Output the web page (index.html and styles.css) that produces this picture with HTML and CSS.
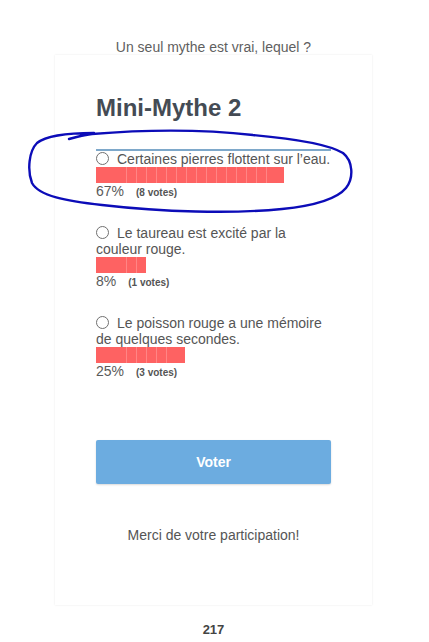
FILE: index.html
```html
<!DOCTYPE html>
<html lang="fr">
<head>
  <meta charset="UTF-8" />
  <meta name="viewport" content="width=device-width, initial-scale=1.0" />
  <title>Mini-Mythe 2</title>
  <link rel="stylesheet" href="styles.css">
</head>
<body>
  <div class="page">
    <p class="intro">Un seul mythe est vrai, lequel ?</p>

    <div class="card">
      <h2>Mini-Mythe 2</h2>

      <div class="options">
        <div class="option">
          <div class="label"><span class="radio"></span>Certaines pierres flottent sur l’eau.</div>
          <div class="bar" style="width: 188px"></div>
          <div class="result">67%<span class="votes">(8 votes)</span></div>
        </div>
        <div class="option">
          <div class="label"><span class="radio"></span>Le taureau est excité par la couleur rouge.</div>
          <div class="bar" style="width: 50px"></div>
          <div class="result">8%<span class="votes">(1 votes)</span></div>
        </div>
        <div class="option">
          <div class="label"><span class="radio"></span>Le poisson rouge a une mémoire de quelques secondes.</div>
          <div class="bar" style="width: 89px"></div>
          <div class="result">25%<span class="votes">(3 votes)</span></div>
        </div>
      </div>

      <div class="vote-btn">Voter</div>

      <p class="thanks">Merci de votre participation!</p>
    </div>

    <p class="count">217</p>
  </div>

  <!-- annotation au stylo par-dessus la page -->
  <svg class="scribble" width="429" height="642" viewBox="0 0 429 642">
    <path d="M69,139 C76,137 83,135 92,134 C140,130 200,129 253,135 C298,139 328,144 343,153 C353,161 354,178 346,188 C336,200 312,206 282,209 C232,214 162,212 102,205 C66,201 39,196 32,183 C27,170 29,151 37,143 C47,135 70,133 94,133"
          fill="none" stroke="#0c0cb8" stroke-width="2.4" stroke-linecap="round" stroke-linejoin="round" />
  </svg>
</body>
</html>
```

FILE: styles.css
```css
body {
  margin: 0;
  font-family: "Liberation Sans", Arial, sans-serif;
  font-size: 14px;
  line-height: 16px;
  color: #555;
  background: #fff;
}
.page {
  width: 427px;
  padding-top: 39px;
}
.intro {
  margin: 0;
  text-align: center;
  color: #5f5f5f;
}
.card {
  width: 235px;
  margin: 0 auto;
  padding: 39px 41px 62px;
  box-shadow: 0 0 2px rgba(0, 0, 0, 0.09);
}
h2 {
  margin: 0;
  font-size: 24px;
  line-height: 28px;
  color: #444b54;
}
.options {
  margin-top: 27px;
  border-top: 2px solid #7ea8ca;
}
.option {
  margin-bottom: 26px;
}
.option:last-child {
  margin-bottom: 0;
}
.radio {
  display: inline-block;
  box-sizing: border-box;
  width: 13px;
  height: 13px;
  border: 1px solid #707070;
  border-radius: 50%;
  margin-right: 8px;
  vertical-align: -1px;
}
.bar {
  height: 16px;
  background:
    linear-gradient(#fe6262, #fe6262) 0 0 / 29px 100% no-repeat,
    repeating-linear-gradient(90deg, #fe6262 0 9px, #ff8585 9px 10px) -9px 0;
  background-color: #fe6262;
}
.result {
  height: 16px;
  color: #5a5a5a;
}
.votes {
  margin-left: 12px;
  font-size: 10px;
  line-height: 10px;
  font-weight: bold;
  color: #555;
}
.vote-btn {
  margin-top: 61px;
  height: 44px;
  line-height: 44px;
  text-align: center;
  background-color: #6cace0;
  color: #fff;
  font-weight: bold;
  border-radius: 2px;
  box-shadow: 0 1px 2px rgba(0, 0, 0, 0.15);
  cursor: pointer;
}
.thanks {
  margin: 43px 0 0;
  text-align: center;
}
.count {
  margin: 17px 0 0;
  text-align: center;
  font-size: 13px;
  font-weight: bold;
  color: #444;
}
.scribble {
  position: absolute;
  left: 0;
  top: 0;
  pointer-events: none;
}
```
